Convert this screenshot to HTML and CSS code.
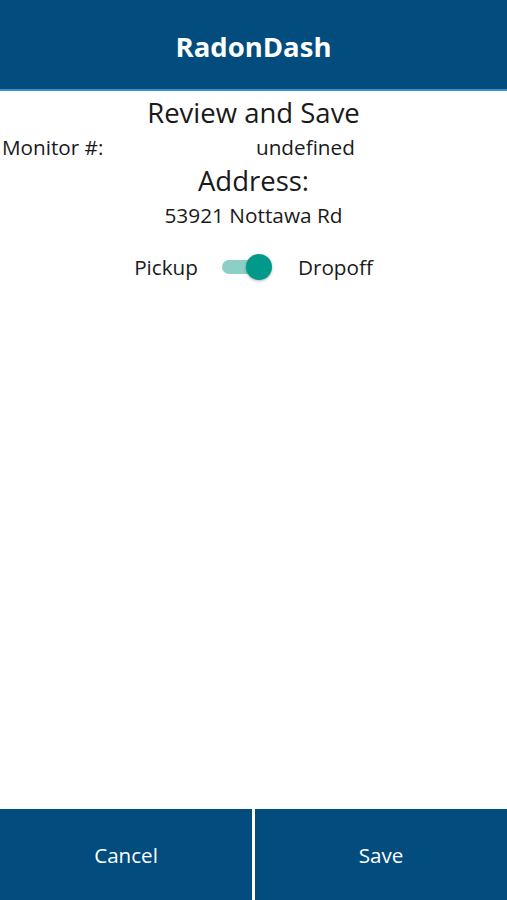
FILE: index.html
```html
<!DOCTYPE html>
<html>
<head>
<meta charset="utf-8">
<link rel="stylesheet" href="styles.css">
</head>
<body>
<div class="app">
  <header class="topbar">
    <h1 class="brand">RadonDash</h1>
  </header>
  <main class="content">
    <h2 class="heading">Review and Save</h2>
    <div class="monitor-row">
      <span class="label">Monitor #:</span>
      <span class="value">undefined</span>
    </div>
    <h2 class="heading address-heading">Address:</h2>
    <div class="address">53921 Nottawa Rd</div>
    <div class="toggle-row">
      <span class="toggle-label">Pickup</span>
      <span class="switch"><span class="track"></span><span class="knob"></span></span>
      <span class="toggle-label">Dropoff</span>
    </div>
  </main>
  <footer class="actions">
    <button class="action">Cancel</button>
    <button class="action">Save</button>
  </footer>
</div>
</body>
</html>
```

FILE: styles.css
```css
* { box-sizing: border-box; }
html, body { margin: 0; padding: 0; height: 100%; }
body {
  font-family: "Open Sans", "Noto Sans", sans-serif;
  color: #1a1a1a;
  background: #fff;
}
.app {
  display: flex;
  flex-direction: column;
  height: 900px;
}
.topbar {
  height: 91px;
  background: #024c7e;
  border-bottom: 2px solid #3c8fd0;
  display: flex;
  align-items: center;
  justify-content: center;
}
.brand {
  margin: 0;
  color: #fff;
  font-size: 27.5px;
  font-weight: 700;
  line-height: 38px;
  padding-top: 5px;
}
.content {
  flex: 1;
  display: flex;
  flex-direction: column;
  padding-top: 3px;
}
.heading {
  margin: 0;
  font-weight: 400;
  font-size: 27.5px;
  text-align: center;
  line-height: 38px;
}
.monitor-row {
  display: grid;
  grid-template-columns: 254px 1fr;
  font-size: 20.7px;
  line-height: 30px;
  padding-left: 2px;
}
.address {
  text-align: center;
  font-size: 20.8px;
  line-height: 30px;
}
.toggle-row {
  display: flex;
  justify-content: center;
  align-items: center;
  gap: 24px;
  margin-top: 22px;
  font-size: 20.7px;
  line-height: 30px;
}
.switch {
  position: relative;
  width: 52px;
  height: 28px;
  display: inline-block;
}
.track {
  position: absolute;
  left: 0;
  top: 7px;
  width: 44px;
  height: 14px;
  border-radius: 7px;
  background: #8ccfc6;
}
.knob {
  position: absolute;
  left: 24px;
  top: 1px;
  width: 26px;
  height: 26px;
  border-radius: 50%;
  background: #00998a;
  box-shadow: 0 1px 3px rgba(0,0,0,0.3);
}
.actions {
  height: 91px;
  display: grid;
  grid-template-columns: 1fr 1fr;
  gap: 3px;
}
.action {
  border: 0;
  background: #024c7e;
  color: #fff;
  font-family: inherit;
  font-size: 20.6px;
  padding: 0;
}
```
